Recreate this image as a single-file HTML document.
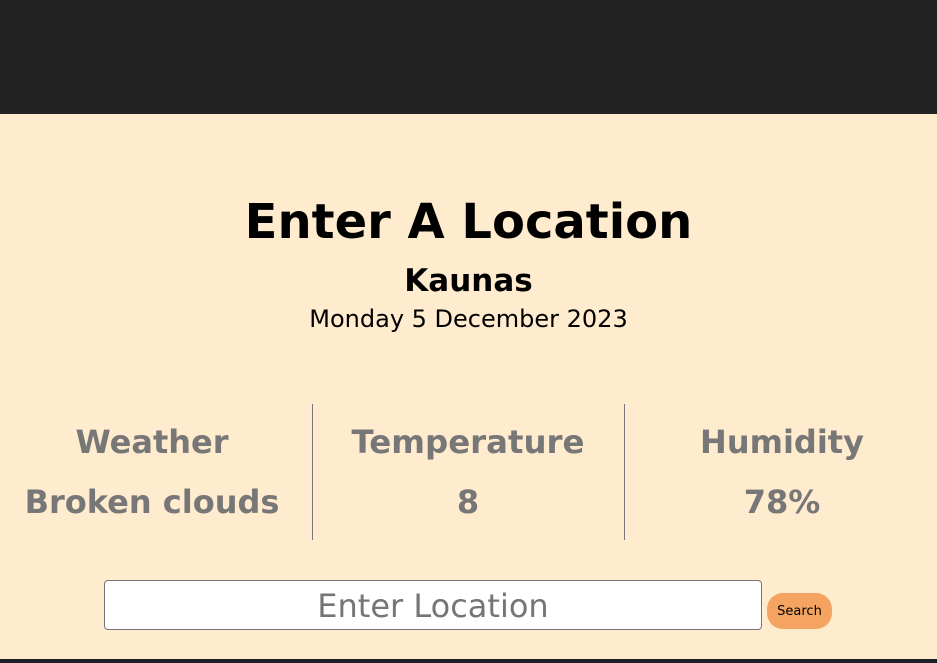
<!DOCTYPE html>
<html><head><meta charset="utf-8"><style>
*{margin:0;padding:0;box-sizing:border-box}
html,body{width:937px;height:663px;overflow:hidden;background:#ffebcd;font-family:"DejaVu Sans","Liberation Sans",sans-serif}
.top{position:absolute;left:0;top:0;width:937px;height:114px;background:#222}
.bot{position:absolute;left:0;top:659px;width:937px;height:4px;background:#1a1f26}
.t{position:absolute;left:0;width:100%;text-align:center;line-height:1;white-space:nowrap}
.col{position:absolute;width:312px}
.g{color:#777;font-weight:bold;font-size:32px}
.div{position:absolute;top:404px;width:1px;height:136px;background:#777}
.inp{position:absolute;left:104px;top:580px;width:658px;height:50px;background:#fff;border:1px solid #767676;border-radius:4px}
.btn{position:absolute;left:767px;top:593px;width:65px;height:36px;background:#f4a460;border-radius:16px;font-size:13px;line-height:37px;text-align:center;color:#000}
</style></head><body>
<div class="top"></div>
<div class="t" style="top:198px;font-size:48px;font-weight:bold">Enter A Location</div>
<div class="t" style="top:266px;font-size:31px;font-weight:bold">Kaunas</div>
<div class="t" style="top:307px;font-size:24px">Monday 5 December 2023</div>
<div class="t g col" style="left:-4px;top:426px">Weather</div>
<div class="t g col" style="left:312px;top:426px;font-size:32.4px">Temperature</div>
<div class="t g col" style="left:626px;top:426px">Humidity</div>
<div class="t g col" style="left:-4px;top:486px">Broken clouds</div>
<div class="t g col" style="left:312px;top:486px">8</div>
<div class="t g col" style="left:626px;top:486px">78%</div>
<div class="div" style="left:312px"></div>
<div class="div" style="left:624px"></div>
<div class="inp"></div>
<div class="t" style="left:104px;width:658px;top:590px;font-size:32px;color:#757575">Enter Location</div>
<div class="btn">Search</div>
<div class="bot"></div>
</body></html>
